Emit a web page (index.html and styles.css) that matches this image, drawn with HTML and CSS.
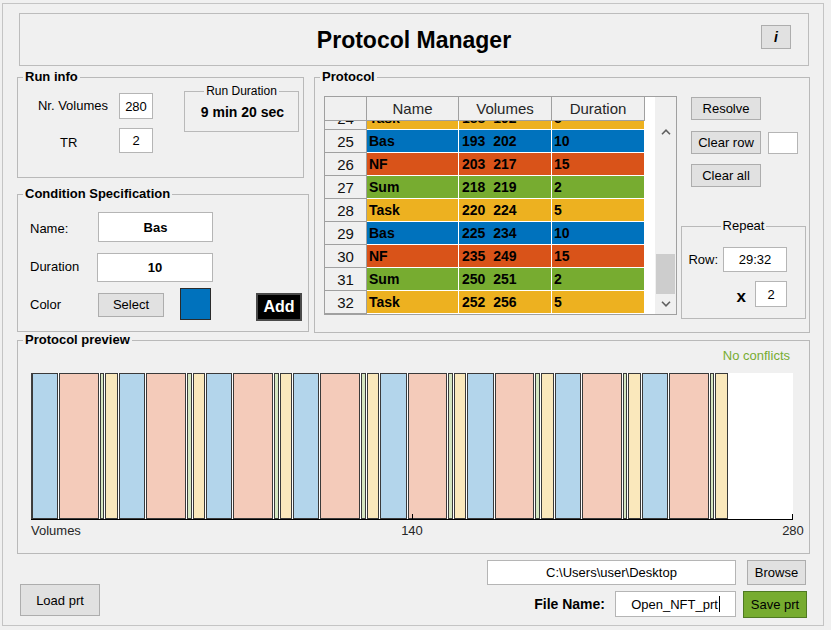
FILE: index.html
```html
<!DOCTYPE html>
<html>
<head>
<meta charset="utf-8">
<title>Protocol Manager</title>
<link rel="stylesheet" href="styles.css">
</head>
<body>
<div class="window">
  <div class="titlebar">
    <h1 class="title">Protocol Manager</h1>
    <button class="btn info-btn">i</button>
  </div>

  <div class="mid">
    <div class="left">
      <fieldset class="panel runinfo">
        <legend class="panel-title">Run info</legend>
        <div class="runinfo-grid">
          <div class="lbl lbl-vol">Nr. Volumes</div>
          <div class="field f-vol">280</div>
          <div class="lbl lbl-tr">TR</div>
          <div class="field f-tr">2</div>
          <fieldset class="panel duration">
            <legend class="sub-title">Run Duration</legend>
            <div class="duration-value">9 min 20 sec</div>
          </fieldset>
        </div>
      </fieldset>

      <fieldset class="panel cond">
        <legend class="panel-title">Condition Specification</legend>
        <div class="cs-body">
          <div class="cs-row cs-row1">
            <div class="cs-lbl cs-lbl1">Name:</div>
            <div class="field f-name">Bas</div>
          </div>
          <div class="cs-row cs-row2">
            <div class="cs-lbl cs-lbl2">Duration</div>
            <div class="field f-dur">10</div>
          </div>
          <div class="cs-row cs-row3">
            <div class="cs-lbl cs-lbl3">Color</div>
            <button class="btn select-btn">Select</button>
            <div class="swatch"></div>
            <button class="add-btn">Add</button>
          </div>
        </div>
      </fieldset>
    </div>

    <fieldset class="panel protocol">
      <legend class="panel-title">Protocol</legend>
      <div class="proto-body">
        <div class="tbl">
          <div class="tbl-main">
            <div class="tbl-head">
              <div class="th th-num"></div>
              <div class="th th-name">Name</div>
              <div class="th th-vol">Volumes</div>
              <div class="th th-dur">Duration</div>
            </div>
            <div class="tbl-body">
              <div class="tbl-rows">
                <div class="tr task"><div class="td-num">24</div><div class="td c-name">Task</div><div class="td c-vol">188  192</div><div class="td c-dur">5</div></div>
                <div class="tr bas"><div class="td-num">25</div><div class="td c-name">Bas</div><div class="td c-vol">193  202</div><div class="td c-dur">10</div></div>
                <div class="tr nf"><div class="td-num">26</div><div class="td c-name">NF</div><div class="td c-vol">203  217</div><div class="td c-dur">15</div></div>
                <div class="tr sum"><div class="td-num">27</div><div class="td c-name">Sum</div><div class="td c-vol">218  219</div><div class="td c-dur">2</div></div>
                <div class="tr task"><div class="td-num">28</div><div class="td c-name">Task</div><div class="td c-vol">220  224</div><div class="td c-dur">5</div></div>
                <div class="tr bas"><div class="td-num">29</div><div class="td c-name">Bas</div><div class="td c-vol">225  234</div><div class="td c-dur">10</div></div>
                <div class="tr nf"><div class="td-num">30</div><div class="td c-name">NF</div><div class="td c-vol">235  249</div><div class="td c-dur">15</div></div>
                <div class="tr sum"><div class="td-num">31</div><div class="td c-name">Sum</div><div class="td c-vol">250  251</div><div class="td c-dur">2</div></div>
                <div class="tr task"><div class="td-num">32</div><div class="td c-name">Task</div><div class="td c-vol">252  256</div><div class="td c-dur">5</div></div>
              </div>
            </div>
          </div>
          <div class="sb">
            <div class="sb-head"></div>
            <div class="sb-btn sb-up"><svg width="10" height="6" viewBox="0 0 10 6"><polyline points="1,5.2 5,1.2 9,5.2" fill="none" stroke="#606060" stroke-width="1.6"/></svg></div>
            <div class="sb-track"></div>
            <div class="sb-thumb"></div>
            <div class="sb-btn sb-down"><svg width="10" height="6" viewBox="0 0 10 6"><polyline points="1,0.8 5,4.8 9,0.8" fill="none" stroke="#606060" stroke-width="1.6"/></svg></div>
          </div>
        </div>

        <div class="proto-side">
          <button class="btn side-btn b-resolve">Resolve</button>
          <div class="clear-row-line">
            <button class="btn side-btn">Clear row</button>
            <div class="field f-rowbox"></div>
          </div>
          <button class="btn side-btn b-clearall">Clear all</button>

          <fieldset class="panel repeat">
            <legend class="sub-title rep-title">Repeat</legend>
            <div class="rep-row rep-row1">
              <div class="rep-lbl">Row:</div>
              <div class="field f-row">29:32</div>
            </div>
            <div class="rep-row rep-row2">
              <div class="rep-x">x</div>
              <div class="field f-times">2</div>
            </div>
          </fieldset>
        </div>
      </div>
    </fieldset>
  </div>

  <fieldset class="panel preview">
    <legend class="panel-title">Protocol preview</legend>
    <div class="no-conflicts">No conflicts</div>
    <svg class="plot" width="791" height="180" viewBox="0 0 791 180">
      <rect x="13" y="9" width="762" height="146" fill="#ffffff"/>
      <line x1="13.5" y1="9" x2="13.5" y2="155" stroke="#404040"/>
      <g class="bars" stroke="#3a3a3a" stroke-width="1">
        <rect class="b-bas" x="14.5" y="9.5" width="25" height="145"/>
        <rect class="b-nf" x="41.5" y="9.5" width="39" height="145"/>
        <rect class="b-sum" x="82.5" y="9.5" width="3" height="145"/>
        <rect class="b-task" x="87.5" y="9.5" width="12" height="145"/>

        <rect class="b-bas" x="101.5" y="9.5" width="25" height="145"/>
        <rect class="b-nf" x="128.5" y="9.5" width="39" height="145"/>
        <rect class="b-sum" x="169.5" y="9.5" width="4" height="145"/>
        <rect class="b-task" x="175.5" y="9.5" width="11" height="145"/>

        <rect class="b-bas" x="188.5" y="9.5" width="25" height="145"/>
        <rect class="b-nf" x="215.5" y="9.5" width="39" height="145"/>
        <rect class="b-sum" x="256.5" y="9.5" width="4" height="145"/>
        <rect class="b-task" x="262.5" y="9.5" width="11" height="145"/>

        <rect class="b-bas" x="275.5" y="9.5" width="25" height="145"/>
        <rect class="b-nf" x="302.5" y="9.5" width="39" height="145"/>
        <rect class="b-sum" x="343.5" y="9.5" width="4" height="145"/>
        <rect class="b-task" x="349.5" y="9.5" width="11" height="145"/>

        <rect class="b-bas" x="362.5" y="9.5" width="26" height="145"/>
        <rect class="b-nf" x="390.5" y="9.5" width="38" height="145"/>
        <rect class="b-sum" x="430.5" y="9.5" width="4" height="145"/>
        <rect class="b-task" x="436.5" y="9.5" width="11" height="145"/>

        <rect class="b-bas" x="449.5" y="9.5" width="26" height="145"/>
        <rect class="b-nf" x="477.5" y="9.5" width="38" height="145"/>
        <rect class="b-sum" x="517.5" y="9.5" width="4" height="145"/>
        <rect class="b-task" x="523.5" y="9.5" width="12" height="145"/>

        <rect class="b-bas" x="537.5" y="9.5" width="25" height="145"/>
        <rect class="b-nf" x="564.5" y="9.5" width="39" height="145"/>
        <rect class="b-sum" x="605.5" y="9.5" width="3" height="145"/>
        <rect class="b-task" x="610.5" y="9.5" width="12" height="145"/>

        <rect class="b-bas" x="624.5" y="9.5" width="25" height="145"/>
        <rect class="b-nf" x="651.5" y="9.5" width="39" height="145"/>
        <rect class="b-sum" x="692.5" y="9.5" width="3" height="145"/>
        <rect class="b-task" x="697.5" y="9.5" width="12" height="145"/>
      </g>
      <line x1="13" y1="155.5" x2="775" y2="155.5" stroke="#000"/>
      <line x1="394.5" y1="150" x2="394.5" y2="155" stroke="#000"/>
      <line x1="774.5" y1="150" x2="774.5" y2="155" stroke="#000"/>
      <text class="axis-label" x="13" y="168" dominant-baseline="middle">Volumes</text>
      <text class="axis-label" x="394" y="168" text-anchor="middle" dominant-baseline="middle">140</text>
      <text class="axis-label" x="775" y="168" text-anchor="middle" dominant-baseline="middle">280</text>
    </svg>
  </fieldset>

  <div class="bottom">
    <button class="btn load-btn">Load prt</button>
    <div class="files">
      <div class="file-row file-row1">
        <div class="field f-path">C:\Users\user\Desktop</div>
        <button class="btn browse-btn">Browse</button>
      </div>
      <div class="file-row file-row2">
        <div class="fname-lbl">File Name:</div>
        <div class="field f-fname">Open_NFT_prt<span class="caret"></span></div>
        <button class="btn save-btn">Save prt</button>
      </div>
    </div>
  </div>
</div>
</body>
</html>
```

FILE: styles.css
```css
html, body {
  margin: 0;
  padding: 0;
  background: #f0f0f0;
}
body {
  font-family: "Liberation Sans", Arial, sans-serif;
  font-size: 13px;
  color: #000;
}

.window {
  margin: 3px 0 0 2px;
  width: 822px;
  height: 623px;
  box-sizing: border-box;
  border: 1px solid #c4c4c4;
  padding: 9px 13px 0 14px;
  display: flex;
  flex-direction: column;
}

/* ---------- generic controls ---------- */
.btn {
  background: #e1e1e1;
  border: 1px solid #adadad;
  font-family: "Liberation Sans", Arial, sans-serif;
  font-size: 13px;
  color: #000;
  padding: 0;
  margin: 0;
  box-sizing: border-box;
}
.field {
  background: #fff;
  border: 1px solid #b5b5b5;
  box-sizing: border-box;
  display: flex;
  align-items: center;
  justify-content: center;
  font-size: 13px;
}
.panel {
  margin: 0;
  padding: 0;
  border: 1px solid #b9b9b9;
  min-width: 0;
  box-sizing: border-box;
}
.panel-title {
  font-weight: bold;
  font-size: 13px;
  line-height: 14px;
  padding: 0 2px;
  margin-left: 5px;
}
.sub-title {
  font-size: 12px;
  line-height: 14px;
  padding: 0 2px;
  margin-left: auto;
  margin-right: auto;
}

/* ---------- title bar ---------- */
.titlebar {
  margin: 0 1px 0 2px;
  height: 53px;
  box-sizing: border-box;
  border: 1px solid #bcbcbc;
  display: grid;
  grid-template-columns: 1fr auto 1fr;
  align-items: center;
}
.title {
  grid-column: 2;
  margin: 0;
  font-size: 23px;
  font-weight: bold;
  line-height: 28px;
}
.info-btn {
  grid-column: 3;
  justify-self: end;
  align-self: start;
  margin: 11px 17px 0 0;
  width: 30px;
  height: 24px;
  font-weight: bold;
  font-style: italic;
  font-size: 14px;
}

/* ---------- middle ---------- */
.mid {
  display: grid;
  grid-template-columns: 292px 496px;
  column-gap: 5px;
  margin-top: 4px;
}
.left {
  display: flex;
  flex-direction: column;
  gap: 9px;
}

/* run info */
.runinfo {
  width: 287px;
  height: 108px;
}
.runinfo-grid {
  display: grid;
  grid-template-columns: 101px 34px 31px 115px;
  grid-template-rows: 35px 25px;
  row-gap: 9px;
}
.lbl-vol {
  grid-column: 1;
  grid-row: 1;
  justify-self: end;
  align-self: end;
  margin-right: 11px;
  line-height: 26px;
}
.f-vol {
  grid-column: 2;
  grid-row: 1;
  align-self: end;
  height: 26px;
}
.lbl-tr {
  grid-column: 1;
  grid-row: 2;
  justify-self: start;
  margin-left: 42px;
  line-height: 30px;
}
.f-tr {
  grid-column: 2;
  grid-row: 2;
  height: 25px;
}
.duration {
  grid-column: 4;
  grid-row: 1 / 3;
  align-self: start;
  height: 48px;
}
.duration-value {
  font-weight: bold;
  font-size: 14px;
  line-height: 17px;
  text-align: center;
  padding-top: 6px;
  padding-left: 2px;
}

/* condition spec */
.cond {
  width: 292px;
  height: 145px;
}
.cs-body {
  padding-left: 12px;
}
.cs-row {
  display: flex;
  align-items: center;
}
.cs-row1 { height: 30px; margin-top: 11px; }
.cs-row2 { height: 29px; margin-top: 11px; }
.cs-row3 { height: 33px; margin-top: 6px; }
.cs-lbl1 { width: 68px; padding-top: 3px; }
.cs-lbl2 { width: 67px; padding-bottom: 3px; }
.cs-lbl3 { width: 68px; }
.f-name {
  width: 115px;
  height: 30px;
  font-weight: bold;
}
.f-dur {
  width: 116px;
  height: 29px;
  font-weight: bold;
}
.select-btn {
  width: 66px;
  height: 24px;
}
.swatch {
  align-self: flex-start;
  margin-left: 16px;
  width: 31px;
  height: 32px;
  box-sizing: border-box;
  background: #0072bd;
  border: 1px solid #2b2b2b;
}
.add-btn {
  align-self: flex-end;
  margin-left: 45px;
  width: 46px;
  height: 28px;
  box-sizing: border-box;
  background: #000;
  color: #fff;
  border: 2px solid #4a4a4a;
  font-family: "Liberation Sans", Arial, sans-serif;
  font-weight: bold;
  font-size: 16px;
  padding: 0;
}

/* protocol */
.protocol {
  height: 263px;
}
.proto-body {
  display: flex;
  align-items: flex-start;
  padding-left: 9px;
}
.tbl {
  margin-top: 12px;
  width: 353px;
  height: 219px;
  box-sizing: border-box;
  border: 1px solid #a0a0a0;
  background: #fff;
  display: flex;
}
.tbl-main {
  width: 330px;
  display: flex;
  flex-direction: column;
}
.tbl-head {
  display: flex;
  height: 24px;
}
.th {
  box-sizing: border-box;
  background: #f0f0f0;
  border-right: 1px solid #a0a0a0;
  border-bottom: 1px solid #a0a0a0;
  font-size: 15px;
  line-height: 23px;
  text-align: center;
  color: #262626;
}
.th-num { width: 42px; }
.th-name { width: 92px; }
.th-vol { width: 93px; }
.th-dur { width: 93px; }
.tbl-body {
  height: 193px;
  overflow: hidden;
}
.tbl-rows {
  margin-top: -14px;
}
.tr {
  display: flex;
  height: 23px;
}
.td-num {
  width: 42px;
  box-sizing: border-box;
  background: #f0f0f0;
  border-right: 1px solid #a0a0a0;
  border-bottom: 1px solid #a0a0a0;
  text-align: center;
  font-size: 15px;
  line-height: 23px;
  color: #111;
}
.td {
  box-sizing: border-box;
  border-right: 1px solid #fff;
  border-bottom: 1px solid #fff;
  font-weight: bold;
  font-size: 14px;
  line-height: 22px;
  padding-left: 2px;
  white-space: pre;
}
.c-name { width: 92px; }
.c-vol { width: 93px; padding-left: 3px; }
.c-dur { width: 93px; }
.task .td { background: #edb120; }
.bas .td { background: #0072bd; }
.nf .td { background: #d95319; }
.sum .td { background: #77ac30; }

.sb {
  width: 21px;
  background: #f0f0f0;
  display: flex;
  flex-direction: column;
}
.sb-head { height: 24px; }
.sb-btn {
  display: flex;
  align-items: center;
  justify-content: center;
}
.sb-up { height: 22px; }
.sb-track { height: 111px; }
.sb-thumb {
  height: 40px;
  margin: 0 1px;
  background: #cdcdcd;
}
.sb-down { height: 20px; }
.sb-btn svg { display: block; }

.proto-side {
  margin-left: 4px;
  width: 125px;
  display: flex;
  flex-direction: column;
}
.side-btn {
  width: 70px;
  height: 23px;
}
.b-resolve {
  margin-left: 10px;
  margin-top: 13px;
}
.clear-row-line {
  display: flex;
  align-items: center;
  margin-left: 10px;
  margin-top: 11px;
}
.f-rowbox {
  margin-left: 7px;
  width: 30px;
  height: 22px;
}
.b-clearall {
  margin-left: 10px;
  margin-top: 10px;
}
.repeat {
  margin-top: 32px;
  width: 125px;
  height: 100px;
}
.rep-title {
  font-size: 13px;
}
.rep-row {
  display: flex;
  align-items: center;
  justify-content: flex-end;
  padding-right: 18px;
}
.rep-row1 { margin-top: 14px; height: 25px; }
.rep-row2 { margin-top: 9px; height: 26px; }
.rep-lbl { margin-right: 5px; }
.f-row { width: 64px; height: 25px; }
.rep-x {
  font-weight: bold;
  font-size: 17px;
  margin-right: 9px;
  padding-top: 5px;
}
.f-times { width: 32px; height: 26px; }

/* preview */
.preview {
  height: 221px;
}
.no-conflicts {
  margin-top: 1px;
  line-height: 16px;
  text-align: right;
  padding-right: 19px;
  color: #77ac30;
}
.plot {
  display: block;
}
.b-bas { fill: #b3d5eb; }
.b-nf { fill: #f4cbba; }
.b-sum { fill: #d6e6c1; }
.b-task { fill: #fae8bc; }
.axis-label {
  font-family: "Liberation Sans", Arial, sans-serif;
  font-size: 13px;
  fill: #262626;
}

/* bottom */
.bottom {
  flex: 1;
  display: flex;
  justify-content: space-between;
  align-items: flex-end;
}
.load-btn {
  margin: 0 0 9px 3px;
  width: 80px;
  height: 32px;
}
.files {
  display: flex;
  flex-direction: column;
  align-items: flex-end;
  gap: 6px;
  margin-right: 3px;
  padding-bottom: 8px;
}
.file-row {
  display: flex;
  align-items: center;
}
.file-row1 { height: 25px; padding-right: 1px; }
.file-row2 { height: 26px; }
.f-path {
  width: 249px;
  height: 25px;
}
.browse-btn {
  margin-left: 11px;
  width: 59px;
  height: 25px;
}
.fname-lbl {
  font-weight: bold;
  font-size: 14px;
  margin-right: 10px;
}
.f-fname {
  width: 121px;
  height: 26px;
}
.caret {
  display: inline-block;
  width: 1px;
  height: 16px;
  background: #000;
  margin-left: 1px;
}
.save-btn {
  margin-left: 7px;
  width: 64px;
  height: 27px;
  background: #77ac30;
  border-color: #4f7a22;
}
```
